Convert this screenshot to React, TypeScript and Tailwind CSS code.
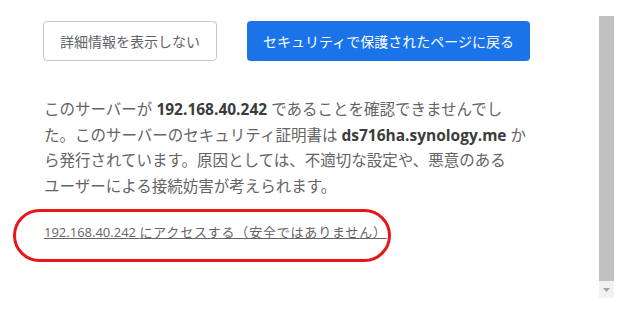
const font = { fontFamily: '"Open Sans", "Noto Sans CJK JP", sans-serif' };

function Scrollbar() {
  return (
    <div className="mt-[16px] flex h-[282px] w-[15px] flex-col bg-[#f1f1f1]">
      <div className="flex-1 bg-[#c1c1c1]" />
      <div className="flex h-[17px] items-center justify-center">
        <svg width="7" height="4" viewBox="0 0 7 4">
          <path d="M0 0 L7 0 L3.5 4 Z" fill="#a3a3a3" />
        </svg>
      </div>
    </div>
  );
}

export default function App() {
  return (
    <div className="flex h-[310px] w-[640px] bg-white" style={font}>
      <div className="w-[599px] pl-[43px] pt-[21px]">
        <div className="flex gap-[30px]">
          <button className="h-[40px] rounded-[4px] border border-[#c8c8c8] bg-white px-[16px] text-[14px] text-[#5f6368]">
            詳細情報を表示しない
          </button>
          <button className="h-[40px] rounded-[4px] bg-[#1a73e8] px-[16px] text-[14px] text-white">
            セキュリティで保護されたページに戻る
          </button>
        </div>
        <p className="mt-[36px] whitespace-nowrap pl-[1px] text-[15.5px] leading-[25.5px] text-[#646464]">
          このサーバーが <b className="font-bold text-[#3c3c3c]">192.168.40.242</b> であることを確認できませんでし
          <br />
          た。このサーバーのセキュリティ証明書は <b className="font-bold text-[#3c3c3c]">ds716ha.synology.me</b> か
          <br />
          ら発行されています。原因としては、不適切な設定や、悪意のある
          <br />
          ユーザーによる接続妨害が考えられます。
        </p>
        <div className="relative mt-[20px] w-fit pl-[1px]">
          <a className="cursor-pointer text-[13px] leading-[20px] text-[#646464] underline">
            192.168.40.242 <span className="tracking-[0.8px]">にアクセスする（安全ではありません）</span>
          </a>
          <div className="absolute left-[-30px] right-[-4px] top-[-10px] bottom-[-19px] rounded-full border-[3px] border-[#e8161b]" />
        </div>
      </div>
      <Scrollbar />
    </div>
  );
}
